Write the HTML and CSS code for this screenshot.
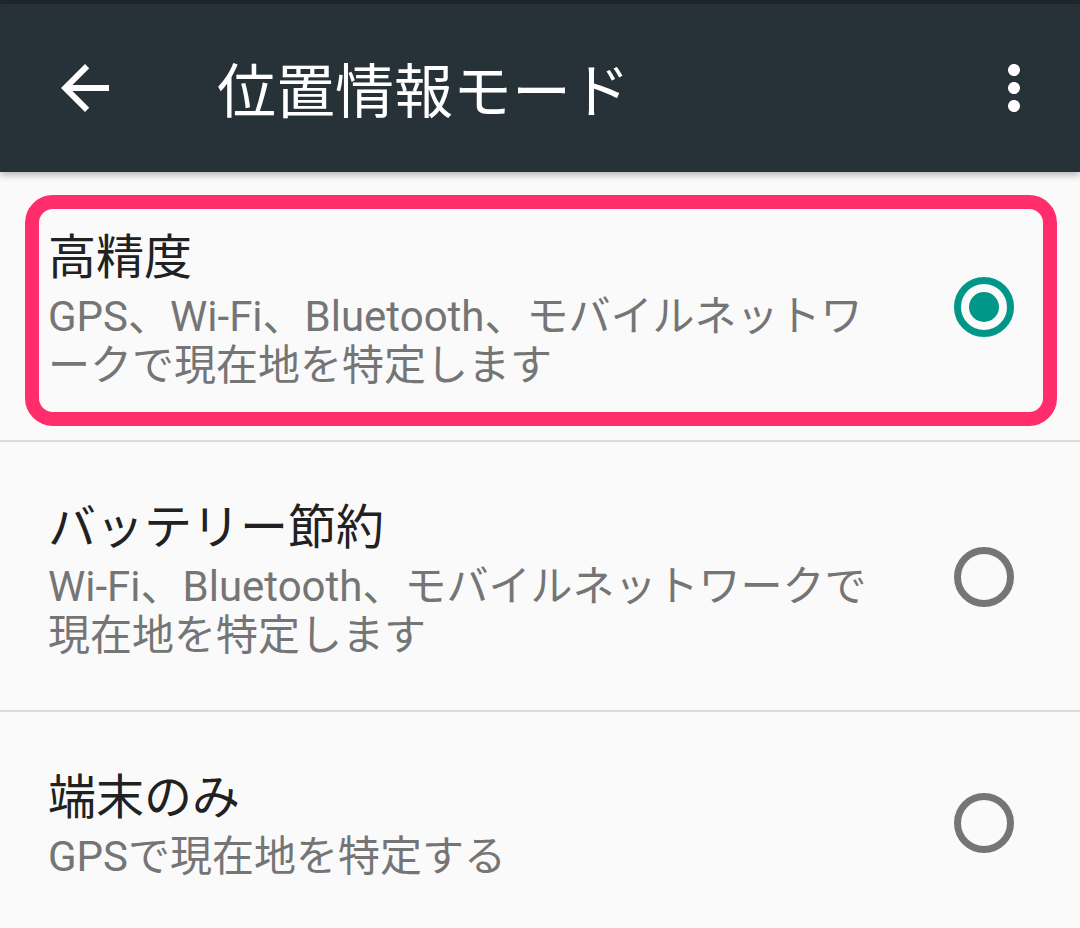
FILE: index.html
```html
<!DOCTYPE html>
<html lang="ja">
<head>
<meta charset="utf-8">
<title>位置情報モード</title>
<link rel="stylesheet" href="styles.css">
</head>
<body>
<div class="statusbar"></div>
<header class="appbar">
  <svg class="icon back" viewBox="0 0 24 24" width="72" height="72"><path fill="#fff" d="M20 11H7.83l5.59-5.59L12 4l-8 8 8 8 1.41-1.41L7.83 13H20v-2z"/></svg>
  <h1 class="title">位置情報モード</h1>
  <svg class="icon more" viewBox="0 0 24 24" width="72" height="72"><path fill="#fff" d="M12 8c1.1 0 2-.9 2-2s-.9-2-2-2-2 .9-2 2 .9 2 2 2zm0 2c-1.1 0-2 .9-2 2s.9 2 2 2 2-.9 2-2-.9-2-2-2zm0 6c-1.1 0-2 .9-2 2s.9 2 2 2 2-.9 2-2-.9-2-2-2z"/></svg>
</header>
<main class="list">
  <div class="item selected">
    <div class="text">
      <div class="item-title">高精度</div>
      <div class="item-sub">GPS、Wi-Fi、Bluetooth、モバイルネットワークで現在地を特定します</div>
    </div>
    <svg class="radio" viewBox="0 0 60 60" width="60" height="60"><circle cx="30" cy="30" r="26.5" fill="none" stroke="#009688" stroke-width="7"/><circle cx="30" cy="30" r="15" fill="#009688"/></svg>
    <div class="highlight"></div>
  </div>
  <div class="divider"></div>
  <div class="item">
    <div class="text">
      <div class="item-title">バッテリー節約</div>
      <div class="item-sub">Wi-Fi、Bluetooth、モバイルネットワークで現在地を特定します</div>
    </div>
    <svg class="radio" viewBox="0 0 60 60" width="60" height="60"><circle cx="30" cy="30" r="26.5" fill="none" stroke="#757575" stroke-width="7"/></svg>
  </div>
  <div class="divider"></div>
  <div class="item">
    <div class="text">
      <div class="item-title">端末のみ</div>
      <div class="item-sub">GPSで現在地を特定する</div>
    </div>
    <svg class="radio" viewBox="0 0 60 60" width="60" height="60"><circle cx="30" cy="30" r="26.5" fill="none" stroke="#757575" stroke-width="7"/></svg>
  </div>
</main>
</body>
</html>
```

FILE: styles.css
```css
* { box-sizing: border-box; }
html, body {
  margin: 0;
  padding: 0;
  background: #fafafa;
  font-family: Roboto, "Noto Sans CJK JP", sans-serif;
  overflow: hidden;
}
.statusbar {
  height: 4px;
  background: #1f272b;
}
.appbar {
  height: 168px;
  background: #273238;
  display: flex;
  align-items: center;
  box-shadow: 0 3px 7px rgba(0, 0, 0, 0.28);
  position: relative;
  z-index: 1;
}
.icon { display: block; flex: none; }
.back { margin-left: 49px; }
.title {
  margin: 0 0 0 96px;
  flex: 1;
  color: #ffffff;
  font-family: "Noto Sans CJK JP", sans-serif;
  font-weight: 400;
  font-size: 59px;
  line-height: 72px;
}
.more { margin-right: 30px; }
.list { display: flex; flex-direction: column; }
.item {
  position: relative;
  display: flex;
  align-items: center;
  padding: 52px 66px 50px 48px;
}
.text {
  flex: none;
  width: 840px;
}
.item-title {
  font-size: 48px;
  line-height: 68px;
  color: #212121;
}
.item-sub {
  font-size: 42px;
  line-height: 49px;
  color: #757575;
  line-break: loose;
}
.radio { margin-left: auto; flex: none; }
.divider {
  height: 2px;
  background: #dcdcdc;
}
.highlight {
  position: absolute;
  top: 23px;
  left: 25px;
  right: 23px;
  bottom: 14px;
  border: 14px solid #ff2d6c;
  border-radius: 28px;
}
```
